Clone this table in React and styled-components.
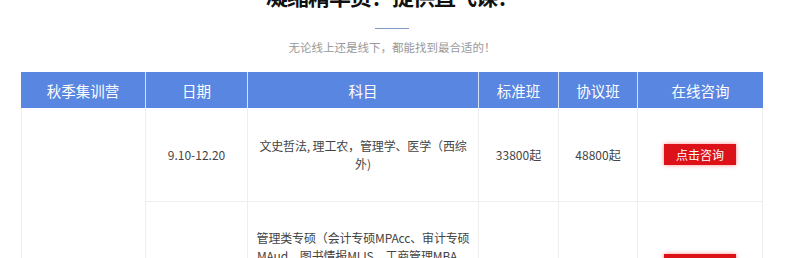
import React from "react";
import styled, { createGlobalStyle } from "styled-components";

const Global = createGlobalStyle`
  html, body { margin: 0; padding: 0; background: #fff; }
  body { font-family: "Noto Sans CJK SC", "Noto Sans", sans-serif; overflow: hidden; }
`;

const Page = styled.div`
  width: 742px;
  margin-left: 21px;
  display: flex;
  flex-direction: column;
  align-items: center;
`;

const Title = styled.h2`
  margin: -20px 0 0;
  font-size: 22px;
  line-height: 30px;
  font-weight: 700;
  color: #111;
  letter-spacing: -1px;
`;

const Divider = styled.div`
  width: 34px;
  height: 1px;
  margin-top: 18px;
  background: #7d9ac6;
`;

const Subtitle = styled.p`
  margin: 9px 0 0;
  font-size: 11.5px;
  line-height: 18px;
  color: #999;
`;

const Grid = styled.div`
  margin-top: 16px;
  width: 742px;
  display: grid;
  grid-template-columns: 125px 102px 231px 80px 79px 125px;
  grid-template-rows: 36px 94px 126px;
`;

const Head = styled.div`
  box-sizing: border-box;
  background: #5886e0;
  color: #fff;
  font-size: 14.5px;
  display: flex;
  align-items: center;
  justify-content: center;
  border-right: ${(p) => (p.$last ? "none" : "1px solid rgba(255,255,255,0.75)")};
`;

const Cell = styled.div`
  box-sizing: border-box;
  display: flex;
  align-items: center;
  justify-content: center;
  text-align: center;
  padding: 0 ${(p) => (p.$wide ? "4px" : "10px")};
  font-size: 12px;
  line-height: 18px;
  color: #444;
  border-right: 1px solid #eeeeee;
  border-bottom: 1px solid #eeeeee;
  border-left: ${(p) => (p.$first ? "1px solid #eeeeee" : "none")};
  grid-row: ${(p) => (p.$span ? `span ${p.$span}` : "auto")};
`;

const Text = styled.span`
  display: block;
  letter-spacing: -0.15px;
`;

const Button = styled.a`
  display: flex;
  align-items: center;
  justify-content: center;
  width: 72px;
  height: 21px;
  background: #dd1219;
  color: #fff;
  font-size: 12px;
  text-decoration: none;
  box-shadow: 0 0 4px rgba(255, 40, 40, 0.55);
`;

const headers = ["秋季集训营", "日期", "科目", "标准班", "协议班", "在线咨询"];

const rows = [
  {
    date: "9.10-12.20",
    subject: "文史哲法, 理工农，管理学、医学（西综外)",
    std: "33800起",
    deal: "48800起",
  },
  {
    date: "9.10-12.20",
    subject:
      "管理类专硕（会计专硕MPAcc、审计专硕MAud、图书情报MLIS、工商管理MBA、公共管理MPA、工程管理MEM、旅游管理MTA）",
    std: "33800起",
    deal: "48800起",
  },
];

export default function App() {
  return (
    <>
      <Global />
      <Page>
        <Title>凝缩精华资！提供直飞课！</Title>
        <Divider />
        <Subtitle>无论线上还是线下，都能找到最合适的！</Subtitle>
        <Grid>
          {headers.map((h, i) => (
            <Head key={h} $last={i === headers.length - 1}>
              {h}
            </Head>
          ))}
          <Cell $first $span={2} />
          {rows.map((r, i) => (
            <React.Fragment key={i}>
              <Cell>{r.date}</Cell>
              <Cell $wide>
                <Text>{r.subject}</Text>
              </Cell>
              <Cell>{r.std}</Cell>
              <Cell>{r.deal}</Cell>
              <Cell>
                <Button href="#">点击咨询</Button>
              </Cell>
            </React.Fragment>
          ))}
        </Grid>
      </Page>
    </>
  );
}
